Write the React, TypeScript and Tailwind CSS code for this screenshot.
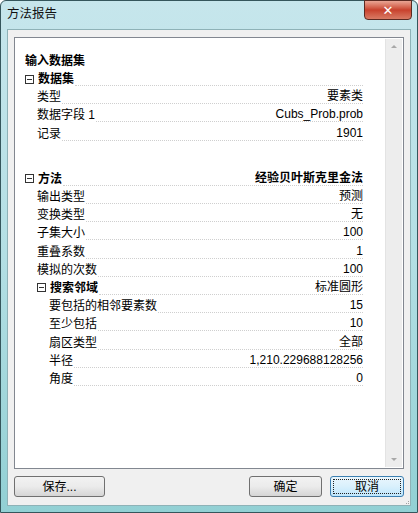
import React from "react";

/* ─── Report data ─── */
type Row = {
  label: string;
  value?: string;
  level: number;
  header?: boolean;
};

const DATASET: Row[] = [
  { label: "数据集", level: 0, header: true },
  { label: "类型", value: "要素类", level: 1 },
  { label: "数据字段 1", value: "Cubs_Prob.prob", level: 1 },
  { label: "记录", value: "1901", level: 1 },
];

const METHOD: Row[] = [
  { label: "方法", value: "经验贝叶斯克里金法", level: 0, header: true },
  { label: "输出类型", value: "预测", level: 1 },
  { label: "变换类型", value: "无", level: 1 },
  { label: "子集大小", value: "100", level: 1 },
  { label: "重叠系数", value: "1", level: 1 },
  { label: "模拟的次数", value: "100", level: 1 },
  { label: "搜索邻域", value: "标准圆形", level: 1, header: true },
  { label: "要包括的相邻要素数", value: "15", level: 2 },
  { label: "至少包括", value: "10", level: 2 },
  { label: "扇区类型", value: "全部", level: 2 },
  { label: "半径", value: "1,210.229688128256", level: 2 },
  { label: "角度", value: "0", level: 2 },
];

const FONT = "font-['Liberation_Sans','Noto_Sans_CJK_SC',sans-serif]";

function Collapse() {
  return (
    <span className="w-[9px] h-[9px] border border-[#333] flex items-center justify-center mr-[4px] shrink-0">
      <span className="w-[5px] h-px bg-[#333]" />
    </span>
  );
}

function ReportRow({ row }: { row: Row }) {
  const indent = row.level === 0 ? "pl-0" : row.level === 1 ? "pl-[12px]" : "pl-[24px]";
  return (
    <div className={`h-[18.2px] flex items-center ${indent}`}>
      {row.header && <Collapse />}
      <span className={`whitespace-nowrap leading-[14px] ${row.header ? "font-bold" : ""}`}>{row.label}</span>
      <div className="flex-1 h-[14px] border-b border-dotted border-[#cfcfcf] text-right leading-[13px] whitespace-nowrap ml-[1px]">
        <span className={row.header && row.level === 0 ? "font-bold" : ""}>{row.value}</span>
      </div>
    </div>
  );
}

function Button({ label, primary }: { label: string; primary?: boolean }) {
  return (
    <button
      className={`w-full h-[21px] rounded-[3px] border text-[12px] text-black flex items-center justify-center p-[2px] ${
        primary
          ? "border-[#3c7fb1] bg-gradient-to-b from-[#eaf6fd] via-[#d9f0fc] to-[#bee6fd]"
          : "border-[#707070] bg-gradient-to-b from-[#f2f2f2] via-[#ebebeb] to-[#d5d5d5]"
      }`}
    >
      <span
        className={`w-full h-full flex items-center justify-center ${
          primary ? "border border-dotted border-[#222]" : ""
        }`}
      >
        {label}
      </span>
    </button>
  );
}

export default function App() {
  return (
    <div className={`w-[418px] h-[513px] ${FONT} text-[12px] text-black`}>
      <div className="w-full h-full rounded-t-[6px] border border-[#35565c] bg-gradient-to-b from-[#c6e6ec] via-[#b3dfe4] to-[#92d0d4] flex flex-col relative">
        {/* ── Title bar ── */}
        <div className="h-[28px] flex items-center pl-[6px] pb-[2px] text-[12.5px] text-[#111]">方法报告</div>
        <div className="absolute top-[-1px] right-[5px] w-[48px] h-[20px] rounded-b-[4px] border border-[#5b2a22] bg-gradient-to-b from-[#e9a594] via-[#c8412d] to-[#d87a64] flex items-center justify-center">
          <span className="text-white font-bold text-[13px] leading-none font-['DejaVu_Sans',sans-serif]">✕</span>
        </div>

        {/* ── Client area ── */}
        <div className="flex-1 mx-[6px] mb-[6px] bg-[#f0f0f0] border border-[#8eb2b7] flex flex-col relative">
          {/* Report panel */}
          <div className="mt-[7px] mx-[6px] h-[432px] bg-white border border-[#828790] flex">
            <div className="flex-1 pl-[10px] pr-[22px] pt-[14px]">
              <div className="h-[18px] flex items-center font-bold">输入数据集</div>
              {DATASET.map((r) => (
                <ReportRow key={r.label} row={r} />
              ))}
              <div className="h-[27px]" />
              {METHOD.map((r) => (
                <ReportRow key={r.label} row={r} />
              ))}
            </div>
            {/* Scrollbar */}
            <div className="w-[17px] bg-[#ededed] border-l border-[#e3e3e3] flex flex-col justify-between items-center py-[6px] my-[1px] mr-[1px]">
              <span className="w-0 h-0 border-x-[3px] border-x-transparent border-b-[3px] border-b-[#a8a8a8]" />
              <span className="w-0 h-0 border-x-[3px] border-x-transparent border-t-[3px] border-t-[#a8a8a8]" />
            </div>
          </div>

          {/* Buttons */}
          <div className="mt-[7px] mx-[6px] flex items-center">
            <div className="w-[91px]">
              <Button label="保存..." />
            </div>
            <div className="flex-1" />
            <div className="w-[73px] mr-[8px]">
              <Button label="确定" />
            </div>
            <div className="w-[74px]">
              <Button label="取消" primary />
            </div>
          </div>

          {/* Resize grip */}
          <div className="absolute right-[1px] bottom-[1px] grid grid-cols-2 gap-[1px]">
            <span />
            <span className="w-[1px] h-[1px] bg-[#a0a0a0]" />
            <span className="w-[1px] h-[1px] bg-[#a0a0a0]" />
            <span className="w-[1px] h-[1px] bg-[#a0a0a0]" />
          </div>
        </div>
      </div>
    </div>
  );
}
